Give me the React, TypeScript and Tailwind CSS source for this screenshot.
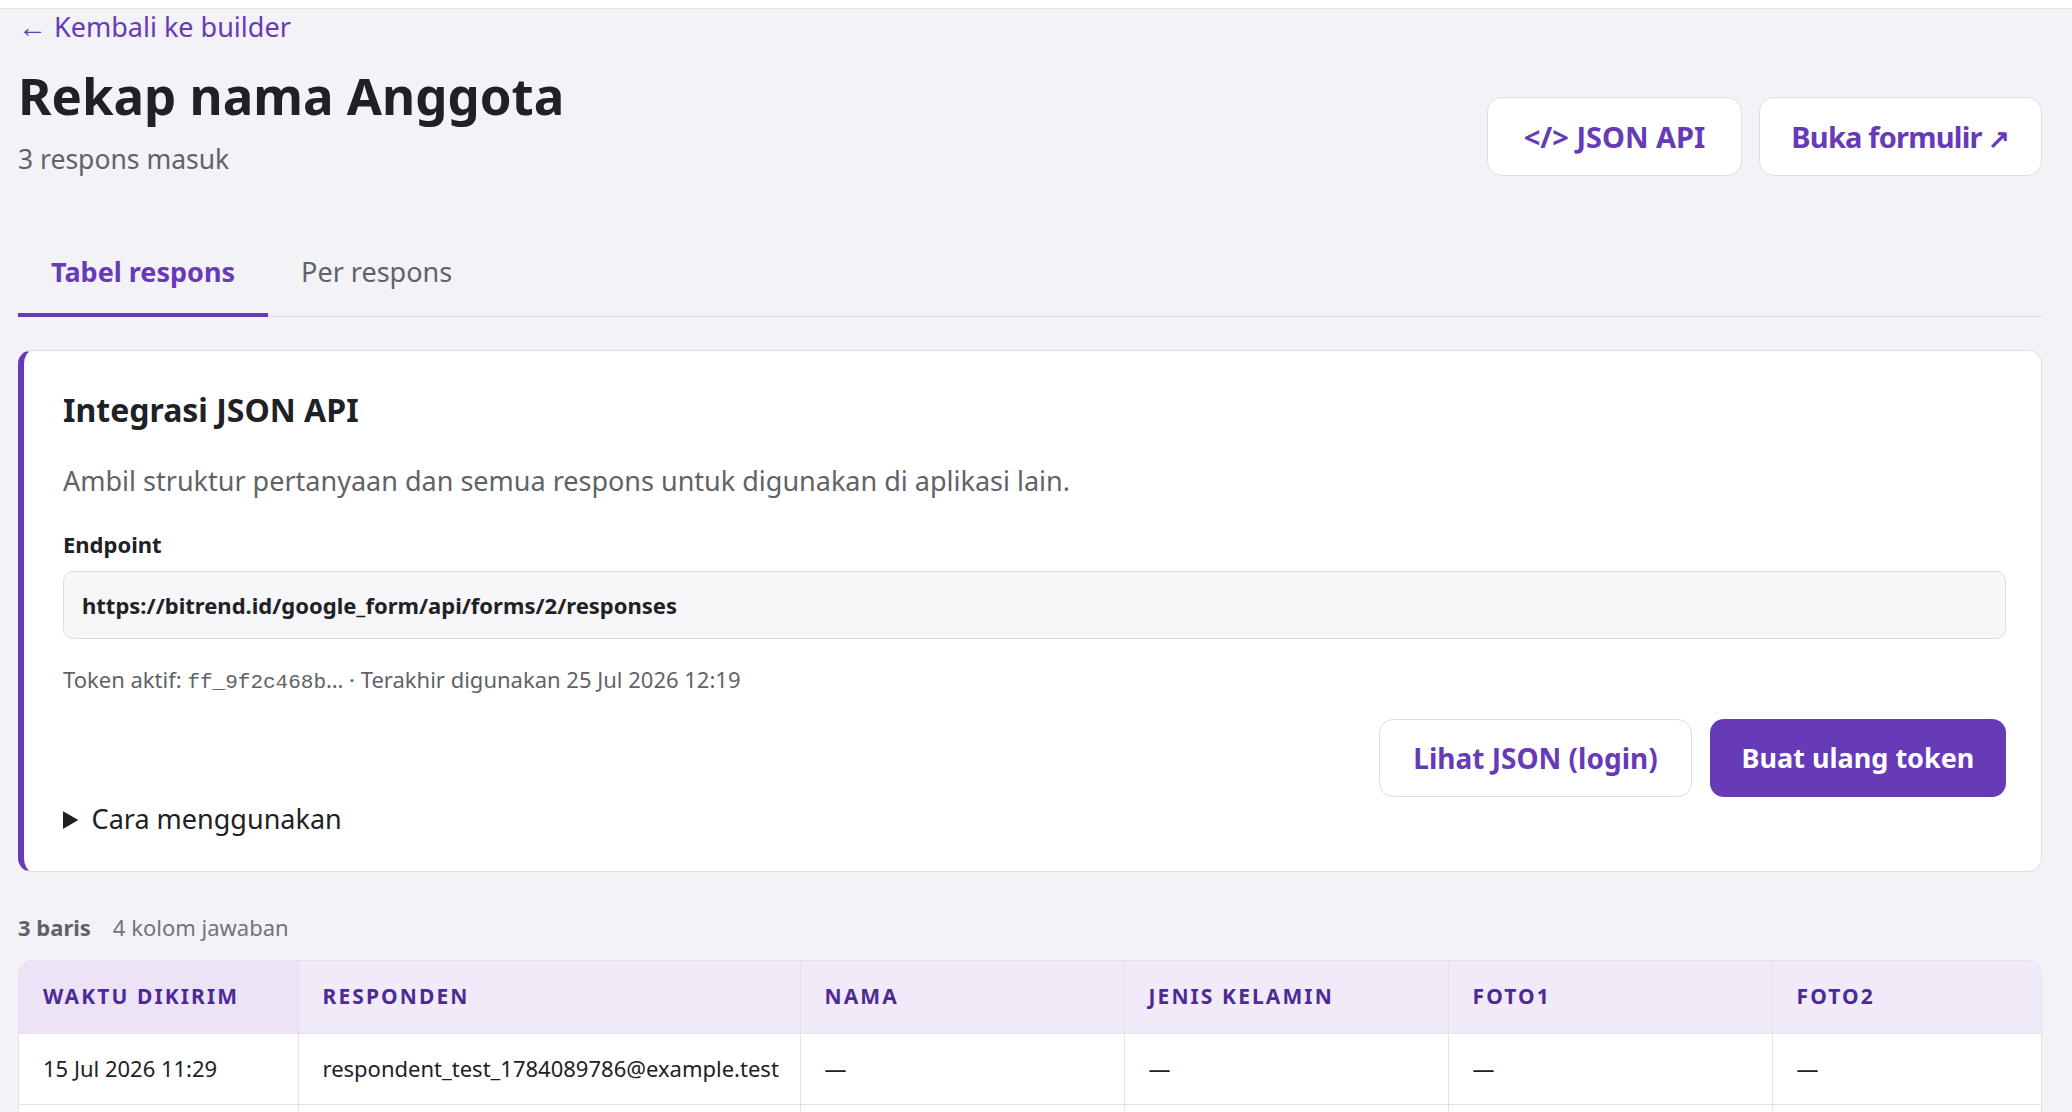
import React from "react";

const rows = [
  { t: "15 Jul 2026 11:29", r: "respondent_test_1784089786@example.test" },
  { t: "15 Jul 2026 11:27", r: "respondent_test_1784089651@example.test" },
  { t: "14 Jul 2026 09:12", r: "respondent_test_1783995120@example.test" },
];

export default function App() {
  return (
    <div className="h-[1112px] overflow-hidden bg-[#f3f2f7] font-['Noto_Sans',sans-serif] text-[#202124]">
      <div className="h-[9px] bg-white border-b border-[#e3e2e8]" />
      <div className="pl-[18px] pr-[30px]">
        <a className="block mt-[3px] text-[27px] leading-[28px] text-[#673ab7]">
          <span className="text-[29px]">←</span> Kembali ke builder
        </a>
        <div className="flex justify-between items-start">
          <div>
            <h1 className="mt-[24px] text-[51px] leading-[60px] font-bold text-[#202124]">
              Rekap nama Anggota
            </h1>
            <p className="mt-[18px] text-[26.5px] leading-[32px] text-[#5f6368]">3 respons masuk</p>
          </div>
          <div className="mt-[56px] flex gap-[17px]">
            <button className="h-[79px] w-[255px] rounded-[15px] bg-white border border-[#dedde5] text-[29px] font-bold text-[#673ab7]">
              &lt;/&gt; JSON API
            </button>
            <button className="h-[79px] w-[283px] rounded-[15px] bg-white border border-[#dedde5] text-[29px] font-bold text-[#673ab7] tracking-[-0.8px]">
              Buka formulir <span className="text-[26px] font-semibold">↗</span>
            </button>
          </div>
        </div>

        <div className="mt-[59px] flex border-b border-[#dcdbe3]">
          <div className="pt-[19px] pb-[23px] px-[33px] border-b-4 border-[#673ab7] -mb-px text-[27px] leading-[36px] font-bold text-[#673ab7]">
            Tabel respons
          </div>
          <div className="pt-[19px] pb-[23px] px-[33px] border-b-4 border-transparent -mb-px text-[27px] leading-[36px] text-[#5f6368]">
            Per respons
          </div>
        </div>

        <div className="mt-[33px] bg-white border border-[#e0dde9] border-l-[6px] border-l-[#673ab7] rounded-[14px] pl-[39px] pr-[35px] pt-[39px] pb-[34px]">
          <h2 className="text-[32px] leading-[40px] font-bold text-[#202124]">Integrasi JSON API</h2>
          <p className="mt-[33px] text-[27px] leading-[36px] text-[#5f6368]">
            Ambil struktur pertanyaan dan semua respons untuk digunakan di aplikasi lain.
          </p>
          <div className="mt-[31px] text-[22px] leading-[28px] font-bold text-[#202124]">Endpoint</div>
          <div className="mt-[13px] h-[68px] flex items-center px-[18px] bg-[#f7f7fa] border border-[#dcdce2] rounded-[10px] text-[22px] font-bold text-[#202124]">
            https://bitrend.id/google_form/api/forms/2/responses
          </div>
          <div className="mt-[26px] text-[22px] leading-[28px] text-[#5f6368]">
            Token aktif: <span className="font-['Liberation_Mono',monospace] text-[21px]">ff_9f2c468b</span>… · Terakhir digunakan 25 Jul 2026 12:19
          </div>
          <div className="mt-[22px] flex justify-end gap-[18px]">
            <button className="h-[78px] w-[313px] rounded-[14px] bg-white border border-[#dedde5] text-[28px] font-bold text-[#673ab7]">
              Lihat JSON (login)
            </button>
            <button className="h-[78px] w-[296px] rounded-[14px] bg-[#673ab7] text-[27px] font-bold text-white">
              Buat ulang token
            </button>
          </div>
          <details className="mt-[4px]">
            <summary className="text-[27px] leading-[36px] text-[#202124] cursor-pointer">Cara menggunakan</summary>
          </details>
        </div>

        <div className="mt-[41px] flex items-baseline gap-[22px] text-[22px] leading-[28px]">
          <span className="font-bold text-[#5f6368]">3 baris</span>
          <span className="text-[#70757a]">4 kolom jawaban</span>
        </div>

        <div className="mt-[19px] bg-white border border-[#e2e0e8] rounded-[14px] overflow-hidden">
          <table className="table-fixed border-collapse w-[2077px]">
            <colgroup>
              <col className="w-[279px]" />
              <col className="w-[502px]" />
              <col className="w-[324px]" />
              <col className="w-[324px]" />
              <col className="w-[324px]" />
              <col className="w-[324px]" />
            </colgroup>
            <thead>
              <tr className="h-[72px] text-left text-[21px] font-bold tracking-[0.1em] text-[#4e2a96]">
                <th className="px-[24px] bg-[#ece4f6] border-r border-b border-[#e4e1ea]">WAKTU DIKIRIM</th>
                <th className="px-[24px] bg-[#f1ebf9] border-r border-b border-[#e4e1ea]">RESPONDEN</th>
                <th className="px-[24px] bg-[#f1ebf9] border-r border-b border-[#e4e1ea]">NAMA</th>
                <th className="px-[24px] bg-[#f1ebf9] border-r border-b border-[#e4e1ea]">JENIS KELAMIN</th>
                <th className="px-[24px] bg-[#f1ebf9] border-r border-b border-[#e4e1ea]">FOTO1</th>
                <th className="px-[24px] bg-[#f1ebf9] border-b border-[#e4e1ea]">FOTO2</th>
              </tr>
            </thead>
            <tbody>
              {rows.map((row) => (
                <tr key={row.r} className="h-[71px] text-[22px] text-[#202124]">
                  <td className="px-[24px] border-r border-b border-[#e4e1ea] whitespace-nowrap">{row.t}</td>
                  <td className="px-[24px] border-r border-b border-[#e4e1ea] whitespace-nowrap">{row.r}</td>
                  <td className="px-[24px] border-r border-b border-[#e4e1ea]">—</td>
                  <td className="px-[24px] border-r border-b border-[#e4e1ea]">—</td>
                  <td className="px-[24px] border-r border-b border-[#e4e1ea]">—</td>
                  <td className="px-[24px] border-b border-[#e4e1ea]">—</td>
                </tr>
              ))}
            </tbody>
          </table>
        </div>
      </div>
    </div>
  );
}
